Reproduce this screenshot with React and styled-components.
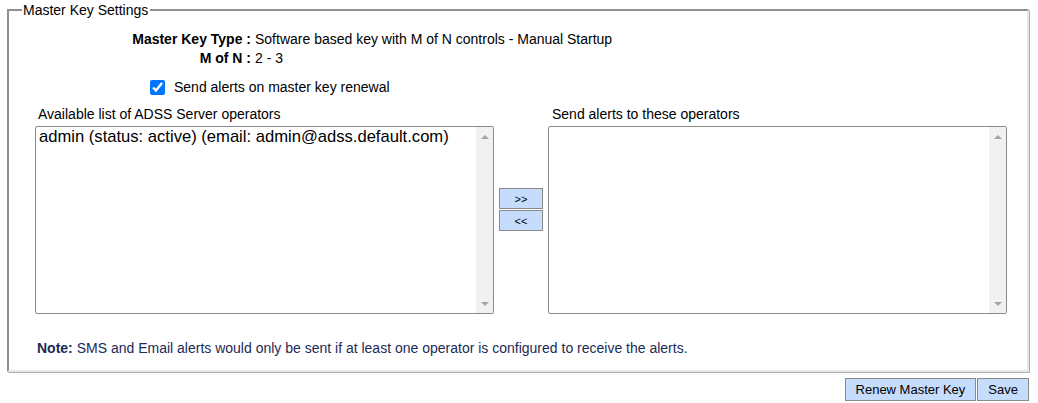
import React, { useState } from "react";
import styled, { createGlobalStyle } from "styled-components";

const GlobalStyle = createGlobalStyle`
  html, body {
    margin: 0;
    padding: 0;
    background: #ffffff;
  }
  body {
    font-family: "Liberation Sans", Arial, sans-serif;
    font-size: 14px;
    color: #000000;
  }
`;

const Page = styled.div`
  width: 1022px;
  padding: 1px 0 0 7px;
`;

const Fieldset = styled.fieldset`
  margin: 0;
  padding: 6px 20px 13px 26px;
  border: 2px solid;
  border-color: #8f8f8f #e6e6e6 #e6e6e6 #8f8f8f;
  box-shadow: inset 1px 1px 0 #ffffff, 1px 1px 0 #b0b0b0;
`;

const Legend = styled.legend`
  padding: 0 2px 0 1px;
  margin-left: -13px;
  font-size: 14px;
  line-height: 18px;
  color: #000;
`;

const InfoGrid = styled.div`
  display: grid;
  grid-template-columns: 216px auto;
  column-gap: 4px;
  row-gap: 2px;
  line-height: 17px;
  padding-top: 6px;
`;

const Label = styled.div`
  text-align: right;
  font-weight: bold;
`;

const Value = styled.div``;

const CheckRow = styled.label`
  display: flex;
  align-items: center;
  gap: 9px;
  margin: 12px 0 0 115px;
  line-height: 17px;
  cursor: pointer;
`;

const Check = styled.input`
  width: 15px;
  height: 15px;
  margin: 0;
  accent-color: #0075ff;
`;

const Lists = styled.div`
  display: grid;
  grid-template-columns: 459px 44px 459px;
  column-gap: 5px;
  margin-top: 10px;
`;

const ListColumn = styled.div`
  display: flex;
  flex-direction: column;
`;

const ListCaption = styled.div`
  line-height: 17px;
  padding-left: ${(p) => p.$indent}px;
  margin-bottom: 3px;
`;

const ListBox = styled.div`
  height: 186px;
  border: 1px solid #8a8a8a;
  border-radius: 2px;
  display: flex;
  background: #fff;
`;

const Options = styled.div`
  flex: 1;
  padding: 0 3px;
  font-family: "Liberation Sans", Arial, sans-serif;
  font-size: 16.6px;
  line-height: 20px;
`;

const Option = styled.div`
  white-space: nowrap;
  cursor: default;
  background: ${(p) => (p.$selected ? "#cfe3ff" : "transparent")};
`;

const ScrollTrack = styled.div`
  width: 17px;
  background: #f1f1f1;
  display: flex;
  flex-direction: column;
  justify-content: space-between;
  align-items: center;
  padding: 8px 0 7px;
`;

const Arrow = styled.div`
  width: 0;
  height: 0;
  border-left: 4px solid transparent;
  border-right: 4px solid transparent;
  ${(p) =>
    p.$down
      ? "border-top: 4px solid #a3a3a3;"
      : "border-bottom: 4px solid #a3a3a3;"}
`;

const Movers = styled.div`
  display: flex;
  flex-direction: column;
  gap: 1px;
  padding-top: 82px;
`;

const Button = styled.button`
  font-family: "Liberation Sans", Arial, sans-serif;
  font-size: ${(p) => (p.$small ? "11px" : "13px")};
  color: #000;
  background: #c6dcfc;
  border: 1.5px solid #8a8a8a;
  margin: 0;
  padding: 0 ${(p) => (p.$small ? 0 : 10)}px;
  height: ${(p) => (p.$small ? 21 : 23)}px;
  cursor: pointer;
`;

const Note = styled.div`
  margin-top: 26px;
  margin-left: 2px;
  line-height: 17px;
  color: #1b2a55;
`;

const Actions = styled.div`
  display: flex;
  justify-content: flex-end;
  gap: 1px;
  margin-top: 6px;
`;

function List({ items, selected, onSelect }) {
  return (
    <ListBox>
      <Options>
        {items.map((it) => (
          <Option
            key={it}
            $selected={selected === it}
            onClick={() => onSelect(it)}
          >
            {it}
          </Option>
        ))}
      </Options>
      <ScrollTrack>
        <Arrow />
        <Arrow $down />
      </ScrollTrack>
    </ListBox>
  );
}

export default function App() {
  const [available, setAvailable] = useState([
    "admin (status: active) (email: admin@adss.default.com)",
  ]);
  const [targets, setTargets] = useState([]);
  const [selLeft, setSelLeft] = useState(null);
  const [selRight, setSelRight] = useState(null);
  const [alerts, setAlerts] = useState(true);

  const moveRight = () => {
    if (!selLeft) return;
    setAvailable(available.filter((a) => a !== selLeft));
    setTargets([...targets, selLeft]);
    setSelLeft(null);
  };
  const moveLeft = () => {
    if (!selRight) return;
    setTargets(targets.filter((a) => a !== selRight));
    setAvailable([...available, selRight]);
    setSelRight(null);
  };

  return (
    <Page>
      <GlobalStyle />
      <Fieldset>
        <Legend>Master Key Settings</Legend>
        <InfoGrid>
          <Label>Master Key Type :</Label>
          <Value>Software based key with M of N controls - Manual Startup</Value>
          <Label>M of N :</Label>
          <Value>2 - 3</Value>
        </InfoGrid>
        <CheckRow>
          <Check
            type="checkbox"
            checked={alerts}
            onChange={(e) => setAlerts(e.target.checked)}
          />
          Send alerts on master key renewal
        </CheckRow>
        <Lists>
          <ListColumn>
            <ListCaption $indent={3}>Available list of ADSS Server operators</ListCaption>
            <List items={available} selected={selLeft} onSelect={setSelLeft} />
          </ListColumn>
          <Movers>
            <Button $small onClick={moveRight}>&gt;&gt;</Button>
            <Button $small onClick={moveLeft}>&lt;&lt;</Button>
          </Movers>
          <ListColumn>
            <ListCaption $indent={4}>Send alerts to these operators</ListCaption>
            <List items={targets} selected={selRight} onSelect={setSelRight} />
          </ListColumn>
        </Lists>
        <Note>
          <b>Note:</b> SMS and Email alerts would only be sent if at least one
          operator is configured to receive the alerts.
        </Note>
      </Fieldset>
      <Actions>
        <Button>Renew Master Key</Button>
        <Button>Save</Button>
      </Actions>
    </Page>
  );
}
